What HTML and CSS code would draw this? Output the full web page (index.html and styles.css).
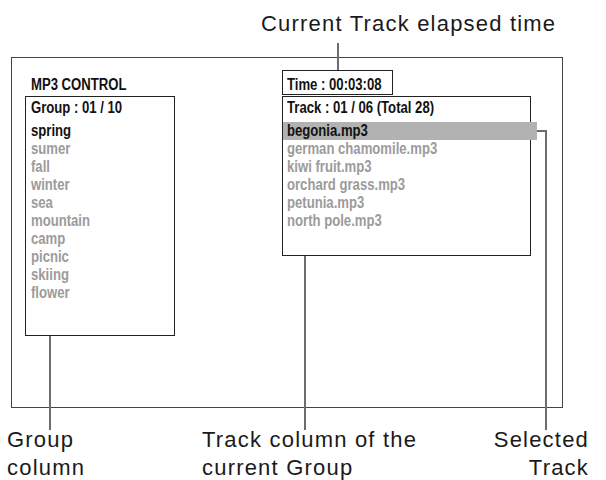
FILE: index.html
```html
<!DOCTYPE html>
<html lang="en">
<head>
    <meta charset="UTF-8">
    <meta name="viewport" content="width=device-width, initial-scale=1.0">
    <title>MP3 Control</title>
    <link rel="stylesheet" href="styles.css">
</head>
<body>
    <div class="figure">
        <p class="callout callout-top">Current Track elapsed time</p>

        <section class="screen">
            <h2 class="screen-title"><span class="narrow">MP3 CONTROL</span></h2>
            <div class="time-box"><span class="narrow">Time : 00:03:08</span></div>

            <div class="column group-column">
                <div class="column-head"><span class="narrow">Group : 01 / 10</span></div>
                <ul>
                    <li class="current"><span class="narrow">spring</span></li>
                    <li><span class="narrow">sumer</span></li>
                    <li><span class="narrow">fall</span></li>
                    <li><span class="narrow">winter</span></li>
                    <li><span class="narrow">sea</span></li>
                    <li><span class="narrow">mountain</span></li>
                    <li><span class="narrow">camp</span></li>
                    <li><span class="narrow">picnic</span></li>
                    <li><span class="narrow">skiing</span></li>
                    <li><span class="narrow">flower</span></li>
                </ul>
            </div>

            <div class="column track-column">
                <div class="column-head"><span class="narrow">Track : 01 / 06 (Total 28)</span></div>
                <ul>
                    <li class="selected"><span class="narrow">begonia.mp3</span></li>
                    <li><span class="narrow">german chamomile.mp3</span></li>
                    <li><span class="narrow">kiwi fruit.mp3</span></li>
                    <li><span class="narrow">orchard grass.mp3</span></li>
                    <li><span class="narrow">petunia.mp3</span></li>
                    <li><span class="narrow">north pole.mp3</span></li>
                </ul>
            </div>
        </section>

        <div class="callouts-bottom">
            <p class="callout">Group<br>column</p>
            <p class="callout">Track column of the<br>current Group</p>
            <p class="callout callout-right">Selected<br>Track</p>
        </div>

        <!-- leader lines from the captions to the screen -->
        <svg class="leaders" width="606" height="480" viewBox="0 0 606 480">
            <path d="M338 43V70" />
            <path d="M50 336V430" />
            <path d="M305 256V430" />
            <path d="M537 131H546V430" />
        </svg>
    </div>
</body>
</html>
```

FILE: styles.css
```css
body {
    margin: 0;
    font-family: "Liberation Sans", Arial, sans-serif;
    color: #1a1a1a;
    background-color: #fff;
}

.figure {
    position: relative;
    width: 606px;
    height: 480px;
    overflow: hidden;
}

.callout {
    margin: 0;
    font-size: 22px;
    line-height: 28px;
    letter-spacing: 1.2px;
}

.callout-top {
    height: 57px;
    box-sizing: border-box;
    padding: 11px 0 0 261px;
    line-height: 26px;
}

.screen {
    margin-left: 11px;
    width: 552px;
    height: 351px;
    box-sizing: border-box;
    border: 1px solid #444;
    padding: 12px 0 0 13px;
    display: grid;
    grid-template-columns: 150px 249px;
    grid-template-rows: 25px auto;
    column-gap: 107px;
    row-gap: 1px;
    align-content: start;
    font-weight: bold;
    font-size: 16px;
    line-height: 18px;
    color: #111;
}

/* the screen font is a bold condensed face */
.narrow {
    display: inline-block;
    white-space: nowrap;
    transform: scaleX(0.82);
    transform-origin: 0 50%;
}

.screen-title {
    margin: 0;
    padding: 6px 0 0 6px;
    font-size: 16px;
    line-height: 18px;
}

.time-box {
    width: 111px;
    height: 25px;
    box-sizing: border-box;
    border: 1px solid #222;
    padding: 5px 0 0 4px;
}

.column {
    box-sizing: border-box;
    border: 1px solid #222;
    padding-top: 2px;
}

.group-column {
    height: 240px;
}

.track-column {
    height: 160px;
}

.column-head {
    padding-left: 5px;
}

.track-column .column-head {
    padding-left: 4px;
}

.column ul {
    list-style-type: none;
    margin: 5px 0 0;
    padding: 0;
}

.column li {
    padding-left: 5px;
    color: #9b9b9b;
}

.track-column li {
    padding-left: 4px;
}

.column li.current {
    color: #111;
}

.column li.selected {
    margin-right: -7px;
    background-color: #b2b2b2;
    color: #111;
}

.callouts-bottom {
    display: grid;
    grid-template-columns: 195px 1fr auto;
    margin-top: 18px;
    padding: 0 17px 0 7px;
}

.callout-right {
    text-align: right;
}

.leaders {
    position: absolute;
    top: 0;
    left: 0;
    pointer-events: none;
}

.leaders path {
    fill: none;
    stroke: #6d6d6d;
    stroke-width: 2;
}
```
